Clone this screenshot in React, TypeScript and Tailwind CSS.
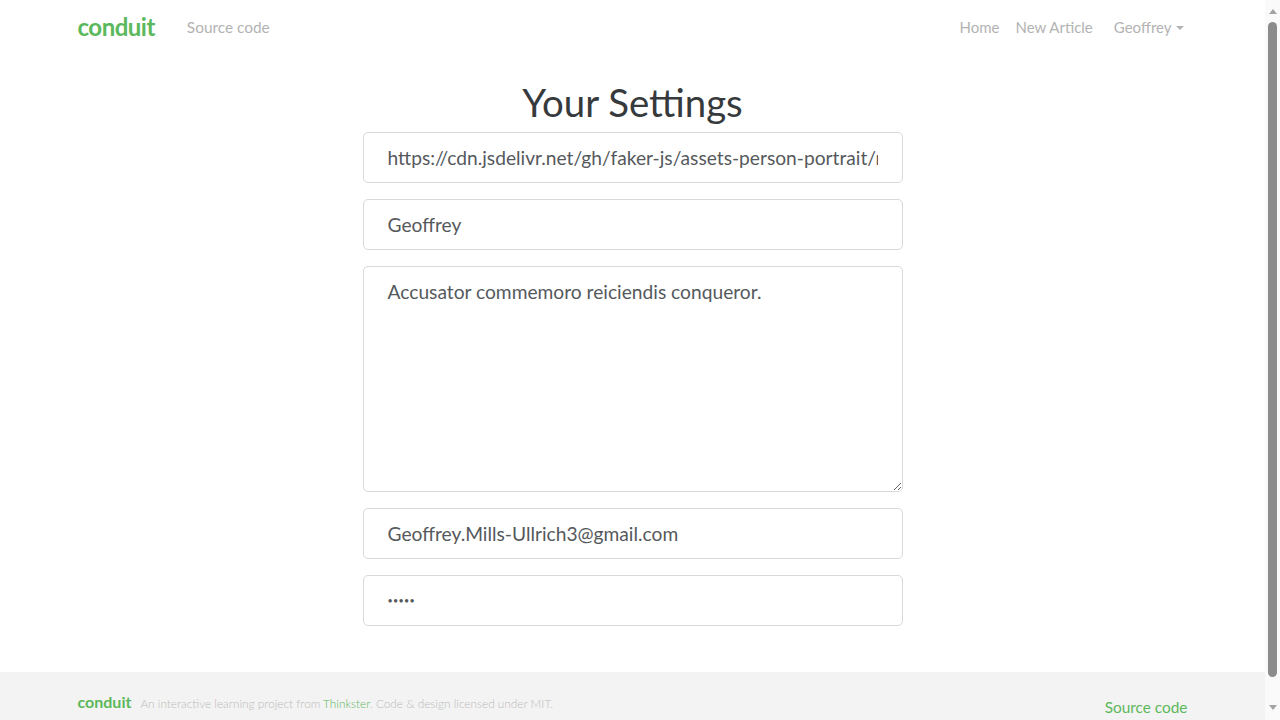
import { useState } from 'react'

const font = { fontFamily: 'Lato, "Open Sans", sans-serif' }

function Scrollbar() {
  return (
    <aside className="flex w-[15px] shrink-0 flex-col items-center bg-[#fafafa]">
      <div className="mt-[9px] h-0 w-0 border-x-[4.5px] border-b-[5px] border-x-transparent border-b-[#a3a3a3]" />
      <div className="mt-[8px] h-[655px] w-[9px] rounded-full bg-[#8c8c8c]" />
      <div className="mt-[28px] h-0 w-0 border-x-[4.5px] border-t-[5px] border-x-transparent border-t-[#a3a3a3]" />
    </aside>
  )
}

export default function App() {
  const [image, setImage] = useState(
    'https://cdn.jsdelivr.net/gh/faker-js/assets-person-portrait/male/512/42.jpg'
  )
  const [username, setUsername] = useState('Geoffrey')
  const [bio, setBio] = useState('Accusator commemoro reiciendis conqueror.')
  const [email, setEmail] = useState('Geoffrey.Mills-Ullrich3@gmail.com')
  const [password, setPassword] = useState('12345')

  const inputClass =
    'block h-[51px] w-full rounded-[5px] border border-[#d9d9d9] bg-white px-6 text-[19.2px] text-[#55595c] outline-none'

  return (
    <div className="flex h-screen bg-white text-[#373a3c]" style={font}>
      <div className="flex-1 overflow-y-auto">
        <nav className="mx-auto flex h-14 w-[1140px] items-center justify-between px-[15px]">
          <div className="flex items-center">
            <a className="-mt-px text-[24px] font-bold leading-none tracking-[-0.5px] text-[#5cb85c]">conduit</a>
            <a className="ml-8 text-[15.4px] text-[#b3b3b3]">Source code</a>
          </div>
          <ul className="-mt-[2px] flex items-center text-[15px] text-[#b3b3b3]">
            <li className="pl-[10px] pr-2">Home</li>
            <li className="pl-2 pr-2">New Article</li>
            <li className="flex items-center pl-[13px] pr-[4px]">
              Geoffrey
              <span className="ml-1 mt-[2px] border-x-[4px] border-t-[4px] border-x-transparent border-t-[#b3b3b3]" />
            </li>
          </ul>
        </nav>

        <div className="mx-auto mt-6 w-[540px]">
          <h1 className="mb-2 text-center text-[38.4px] leading-[44px]">Your Settings</h1>
          <form className="flex flex-col gap-4">
            <input className={inputClass} value={image} onChange={(e) => setImage(e.target.value)} />
            <input className={inputClass} value={username} onChange={(e) => setUsername(e.target.value)} />
            <textarea
              rows={8}
              className="block h-[226px] w-full resize-y rounded-[5px] border border-[#d9d9d9] bg-white px-6 py-3 text-[19.2px] leading-[26.67px] text-[#55595c] outline-none"
              value={bio}
              onChange={(e) => setBio(e.target.value)}
            />
            <input className={inputClass} value={email} onChange={(e) => setEmail(e.target.value)} />
            <input
              type="password"
              className="block h-[51px] w-full rounded-[5px] border border-[#d9d9d9] bg-white px-6 text-[9px] tracking-[0.3px] text-[#55595c] outline-none"
              value={password}
              onChange={(e) => setPassword(e.target.value)}
            />
          </form>
        </div>

        <footer className="mt-[46px] bg-[#f3f3f3] pb-10 pt-[18px]">
          <div className="mx-auto flex w-[1140px] items-start justify-between px-[15px]">
            <div className="flex items-baseline leading-6">
              <span className="text-[16px] font-bold text-[#5cb85c]">conduit</span>
              <span className="ml-[9px] text-[11.8px] font-light text-[#bbb]">
                An interactive learning project from <span className="text-[#5cb85c]">Thinkster</span>. Code &amp;
                design licensed under MIT.
              </span>
            </div>
            <a className="mt-[5px] text-[15.4px] leading-6 text-[#5cb85c]">Source code</a>
          </div>
        </footer>
      </div>
      <Scrollbar />
    </div>
  )
}
